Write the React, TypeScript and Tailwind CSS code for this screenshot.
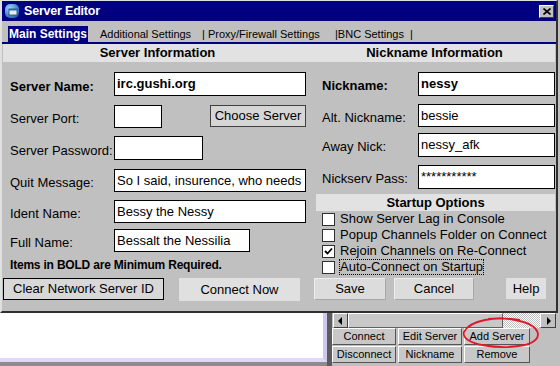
import React from 'react';

type BoxProps = { value?: string; className: string; bold?: boolean };

function TextBox({ value = '', className, bold }: BoxProps) {
  return (
    <div
      className={`bg-white border border-black flex items-center pl-[2px] text-[13px] text-black whitespace-nowrap overflow-hidden ${bold ? 'font-bold' : ''} ${className}`}
    >
      {value}
    </div>
  );
}

function LeftRow({ label, bold, children, className }: { label: string; bold?: boolean; children: React.ReactNode; className: string }) {
  return (
    <div className={`flex items-center ${className}`}>
      <span className={`w-[104px] pt-[5px] text-black whitespace-nowrap ${bold ? 'font-bold text-[13px]' : 'text-[13px]'}`}>{label}</span>
      {children}
    </div>
  );
}

function RightRow({ label, bold, value, valueBold, className }: { label: string; bold?: boolean; value: string; valueBold?: boolean; className: string }) {
  return (
    <div className={`flex items-center ${className}`}>
      <span className={`w-[96px] pt-[4px] text-[13px] text-black whitespace-nowrap ${bold ? 'font-bold' : ''}`}>{label}</span>
      <TextBox value={value} bold={valueBold} className="w-[137px] h-full" />
    </div>
  );
}

function Check({ label, checked, focus }: { label: string; checked?: boolean; focus?: boolean }) {
  return (
    <div className="h-[16px] flex items-center">
      <div className="w-[13px] h-[13px] bg-white border border-[#303030] flex items-center justify-center">
        {checked && (
          <svg width="9" height="9" viewBox="0 0 9 9">
            <path d="M1 4 L3.5 6.5 L8 1.5" stroke="#000" strokeWidth="1.8" fill="none" />
          </svg>
        )}
      </div>
      <span className={`ml-[5px] text-[13px] leading-[14px] text-black whitespace-nowrap ${focus ? 'outline outline-1 outline-dotted outline-black' : ''}`}>
        {label}
      </span>
    </div>
  );
}

function ListButton({ label, className }: { label: string; className: string }) {
  return (
    <div
      className={`h-[17px] bg-[#c8c8c8] border-t border-l border-t-white border-l-white border-r border-b border-r-[#555] border-b-[#555] flex items-center justify-center text-[11px] text-black whitespace-nowrap ${className}`}
    >
      {label}
    </div>
  );
}

export default function App() {
  return (
    <div className="relative w-[560px] h-[366px] overflow-hidden bg-[#c0c0c0] font-['Liberation_Sans',Arial,sans-serif]">
      {/* editor window */}
      <div className="w-[558px] h-[313px] flex flex-col bg-[#c0c0c0] border-t border-l-2 border-t-[#e0e0e0] border-l-[#e0e0e0] border-r-2 border-b-2 border-r-[#303030] border-b-[#303030]">
        <div className="h-[20px] bg-[#000080] flex items-center pl-[2px] pr-[2px] shrink-0">
          <svg width="16" height="16" viewBox="0 0 16 16">
            <defs>
              <radialGradient id="g" cx="0.35" cy="0.3" r="0.8">
                <stop offset="0" stopColor="#9fd4ff" />
                <stop offset="1" stopColor="#1c5fb8" />
              </radialGradient>
            </defs>
            <rect x="1" y="1" width="14" height="14" rx="5" fill="url(#g)" />
            <rect x="5" y="6" width="8" height="6" fill="#e8eef8" stroke="#23446e" strokeWidth="0.8" />
            <rect x="5" y="6" width="8" height="1.5" fill="#2a66b0" />
          </svg>
          <span className="ml-[4px] text-white font-bold text-[12.5px] tracking-[-0.2px]">Server Editor</span>
          <div className="ml-auto w-[15px] h-[13px] bg-[#c0c0c0] border-t border-l border-t-white border-l-white border-r border-b border-r-[#404040] border-b-[#404040] flex items-center justify-center">
            <svg width="8" height="7" viewBox="0 0 8 7">
              <path d="M0.5 0.5 L7.5 6.5 M7.5 0.5 L0.5 6.5" stroke="#000" strokeWidth="1.6" />
            </svg>
          </div>
        </div>

        <div className="h-[21px] flex items-end shrink-0 text-[11px] text-black">
          <div className="ml-[6px] w-[80px] h-[16px] bg-[#000080] text-white font-bold text-[12px] flex items-center justify-center">
            Main Settings
          </div>
          <span className="ml-[12px] w-[102px] h-[16px] flex items-center">Additional Settings</span>
          <span className="w-[133px] h-[16px] flex items-center whitespace-nowrap">| Proxy/Firewall Settings</span>
          <span className="h-[16px] flex items-center whitespace-nowrap">|BNC Settings&nbsp;&nbsp;|</span>
        </div>
        <div className="h-[2px] bg-[#000080] shrink-0" />

        <div className="h-[18px] mx-[1px] bg-[#e2e2e2] flex shrink-0 text-[13px] font-bold text-black">
          <div className="w-[307px] flex items-center justify-center pl-[2px]">Server Information</div>
          <div className="flex-1 flex items-center justify-center pl-[4px]">Nickname Information</div>
        </div>

        <div className="flex flex-1">
          {/* left column */}
          <div className="w-[308px] pl-[8px] pr-[4px] flex flex-col">
            <LeftRow label="Server Name:" bold className="mt-[10px] h-[24px]">
              <TextBox value="irc.gushi.org" bold className="w-[192px] h-full" />
            </LeftRow>
            <LeftRow label="Server Port:" className="mt-[9px] h-[23px]">
              <TextBox className="w-[48px] h-full" />
              <div className="ml-auto -mt-[2px] w-[96px] h-[22px] bg-[#d6d6d6] border border-[#404040] flex items-center justify-center text-[13px] text-black">
                Choose Server
              </div>
            </LeftRow>
            <LeftRow label="Server Password:" className="mt-[8px] h-[24px]">
              <TextBox className="w-[89px] h-full" />
            </LeftRow>
            <LeftRow label="Quit Message:" className="mt-[9px] h-[23px]">
              <TextBox value="So I said, insurence, who needs" className="w-[192px] h-full" />
            </LeftRow>
            <LeftRow label="Ident Name:" className="mt-[8px] h-[23px]">
              <TextBox value="Bessy the Nessy" className="w-[192px] h-full" />
            </LeftRow>
            <LeftRow label="Full Name:" className="mt-[6px] h-[23px]">
              <TextBox value="Bessalt the Nessilia" className="w-[136px] h-full" />
            </LeftRow>
            <div className="mt-[6px] h-[14px] flex items-center text-[12px] font-bold tracking-[-0.2px] text-black whitespace-nowrap">
              Items in BOLD are Minimum Required.
            </div>
            <div className="mt-[6px] -ml-[7px] flex h-[22px]">
              <div className="w-[161px] h-[22px] bg-[#d8d8d8] border border-black flex items-center justify-center text-[13px] text-black whitespace-nowrap">
                Clear Network Server ID
              </div>
              <div className="ml-[15px] w-[121px] h-[23px] bg-[#e0e0e0] flex items-center justify-center text-[13px] text-black">
                Connect Now
              </div>
            </div>
          </div>

          {/* right column */}
          <div className="w-[246px] flex flex-col">
            <div className="pl-[12px] pr-[1px] flex flex-col">
              <RightRow label="Nickname:" bold value="nessy" valueBold className="mt-[10px] h-[24px]" />
              <RightRow label="Alt. Nickname:" value="bessie" className="mt-[8px] h-[23px]" />
              <RightRow label="Away Nick:" value="nessy_afk" className="mt-[6px] h-[24px]" />
              <RightRow label="Nickserv Pass:" value="***********" className="mt-[8px] h-[24px]" />
            </div>
            <div className="mt-[5px] ml-[6px] mr-[1px] h-[17px] bg-[#e2e2e2] flex items-center justify-center text-[13px] font-bold text-black">
              Startup Options
            </div>
            <div className="pl-[12px] flex flex-col">
              <Check label="Show Server Lag in Console" />
              <Check label="Popup Channels Folder on Connect" />
              <Check label="Rejoin Channels on Re-Connect" checked />
              <Check label="Auto-Connect on Startup" focus />
            </div>
            <div className="mt-[3px] pl-[4px] flex h-[22px] text-[13px] text-black">
              <div className="w-[72px] h-[22px] bg-[#dcdcdc] border border-[#a8a8a8] border-t-[#eeeeee] border-l-[#eeeeee] flex items-center justify-center">Save</div>
              <div className="ml-[8px] w-[80px] h-[22px] bg-[#dcdcdc] border border-[#a8a8a8] border-t-[#eeeeee] border-l-[#eeeeee] flex items-center justify-center">Cancel</div>
              <div className="ml-[32px] w-[40px] h-[21px] bg-[#e0e0e0] flex items-center justify-center">Help</div>
            </div>
          </div>
        </div>
      </div>

      {/* behind the editor: server list */}
      <div className="flex h-[53px]">
        <div className="w-[327px] flex flex-col">
          <div className="h-[49px] bg-white border-r-4 border-b-4 border-r-[#cfc8ec] border-b-[#e0d8f6]" />
          <div className="flex-1 bg-[#8c8c8c]" />
        </div>
        <div className="w-[5px] bg-[#5c5c5c]" />
        <div className="flex-1 flex flex-col">
          <div className="h-[15px] ml-[1px] flex">
            <div className="w-[15px] h-full bg-[#c0c0c0] border-t border-l border-t-white border-l-white border-r border-b border-r-[#404040] border-b-[#404040] flex items-center justify-center">
              <svg width="5" height="8" viewBox="0 0 5 8"><path d="M4 0 L0 4 L4 8 Z" fill="#000" /></svg>
            </div>
            <div className="w-[155px] h-full bg-[#c8c8c8] border-t border-l border-t-white border-l-white border-r border-b border-r-[#606060] border-b-[#606060]" />
            <div className="w-[37px] h-full bg-[repeating-conic-gradient(#ffffff_0%_25%,#c0c0c0_0%_50%)] bg-[length:2px_2px]" />
            <div className="w-[16px] h-full bg-[#c0c0c0] border-t border-l border-t-white border-l-white border-r border-b border-r-[#404040] border-b-[#404040] flex items-center justify-center">
              <svg width="5" height="8" viewBox="0 0 5 8"><path d="M1 0 L5 4 L1 8 Z" fill="#000" /></svg>
            </div>
          </div>
          <div className="flex gap-[2px] mt-0">
            <ListButton label="Connect" className="w-[64px]" />
            <ListButton label="Edit Server" className="w-[64px]" />
            <ListButton label="Add Server" className="w-[66px]" />
          </div>
          <div className="flex gap-[2px] mt-[1px]">
            <ListButton label="Disconnect" className="w-[64px]" />
            <ListButton label="Nickname" className="w-[64px]" />
            <ListButton label="Remove" className="w-[66px]" />
          </div>
        </div>
      </div>

      {/* red hand-drawn circle */}
      <svg className="absolute left-0 top-0 pointer-events-none" width="560" height="366" viewBox="0 0 560 366">
        <path
          d="M520 320 C495 316 470 320 464 332 C460 345 500 350 525 345 C545 340 542 325 515 320 C505 318 495 318 488 319"
          stroke="#e0182a"
          strokeWidth="1.8"
          fill="none"
        />
      </svg>
    </div>
  );
}
